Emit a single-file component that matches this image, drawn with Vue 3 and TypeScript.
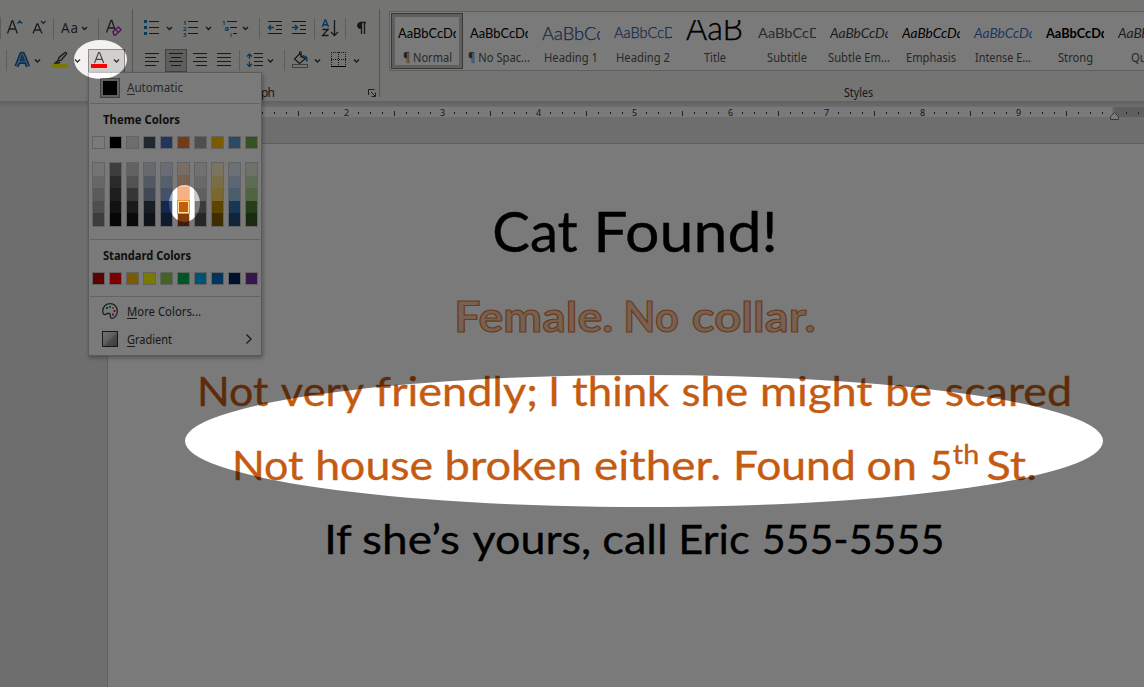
<script setup lang="ts">
import { h } from 'vue'

interface FitProps { t: string; w: number; hgt: number; b: number; u?: number }

// A single line of text set to an exact advance width.
const Fit = (p: FitProps) =>
  h('svg', { width: p.w, height: p.hgt, class: 'fit' }, [
    h('text', { x: 0, y: p.b, textLength: p.w, lengthAdjust: 'spacingAndGlyphs', fill: 'currentColor' }, p.t),
    p.u ? h('rect', { x: 0, y: p.b + 2, width: p.u, height: 1, fill: 'currentColor' }) : null,
  ])
Fit.props = ['t', 'w', 'hgt', 'b', 'u']

const Chevron = (p: { x: number; y: number }) =>
  h('path', { d: `M${p.x} ${p.y}l2.5 2.5 2.5-2.5`, fill: 'none', stroke: '#333', 'stroke-width': 1.4 })
Chevron.props = ['x', 'y']

// Side bearings of the document face, in ems.
const left: Record<string, number> = { C: .05, F: .09, N: .09, c: .04, v: .005, f: .015, I: .1, t: .015, s: .03, m: .08, b: .075, h: .075, e: .04, o: .04, y: .005, E: .09, '5': .04, S: .035 }
const right: Record<string, number> = { t: .02, '!': .1, '.': .07, y: .005, ';': .07, I: .1, k: 0, e: .035, d: .075, h: .07, f: 0, s: .03, ',': .07, l: .08, c: .02, '5': .04, r: 0, n: .07 }

interface Word { t: string; x: number; w: number; b: number; size: number }
const PAGE = 108
const line = (cls: string, size: number, hgt: number, b: number, words: [string, number, number, number?, number?][]) => ({
  cls,
  size,
  hgt,
  words: words.map(([t, from, to, s, base]): Word => {
    const em = s ?? size
    const lb = left[t[0]] * em
    return { t, x: from - lb - PAGE, w: to - from + lb + right[t[t.length - 1]] * em, b: base ?? b, size: em }
  }),
})

const lines = [
  line('dark', 56, 80, 58, [['Cat', 495, 576.7], ['Found!', 598.3, 772.3]]),
  line('outlined', 41.5, 74, 58.2, [['Female.', 458, 610.4], ['No', 627.3, 679.3], ['collar.', 693.5, 812.8]]),
  line('orange', 41.5, 74, 58, [
    ['Not', 200.7, 267.7], ['very', 281, 363.7], ['friendly;', 376, 535], ['I', 552.3, 555.7], ['think', 572.7, 669.3],
    ['she', 682.7, 746.7], ['might', 763.3, 871.7], ['be', 888.3, 930.7], ['scared', 946, 1069],
  ]),
  line('orange', 41.5, 74, 58, [
    ['Not', 235.7, 302.7], ['house', 318.3, 431.7], ['broken', 447.7, 579], ['either.', 595.7, 718.3], ['Found', 736.7, 852.7],
    ['on', 868.3, 914], ['5', 931.7, 950.7], ['th', 953.3, 977.3, 27.5, 42], ['St.', 987.7, 1034],
  ]),
  line('dark', 41.5, 74, 58, [['If', 328.3, 351.7], ['she’s', 363.3, 458.7], ['yours,', 472.7, 588.3], ['call', 604, 664.3], ['Eric', 682, 749], ['555-5555', 763.3, 942.7]]),
]

const styles = [
  { n: '¶ Normal', nw: 49, s: 'AaBbCcDd', sw: 62, b: 18, k: 'normal' },
  { n: '¶ No Spac...', nw: 62, s: 'AaBbCcDd', sw: 62, b: 18, k: 'normal' },
  { n: 'Heading 1', nw: 54, s: 'AaBbCc', sw: 63, b: 20, k: 'h1' },
  { n: 'Heading 2', nw: 54, s: 'AaBbCcD', sw: 61, b: 18, k: 'h2' },
  { n: 'Title', nw: 22, s: 'AaB', sw: 57, b: 20, k: 'title' },
  { n: 'Subtitle', nw: 40, s: 'AaBbCcD', sw: 62, b: 18, k: 'subtitle' },
  { n: 'Subtle Em...', nw: 62, s: 'AaBbCcDd', sw: 62, b: 18, k: 'subtle' },
  { n: 'Emphasis', nw: 50, s: 'AaBbCcDd', sw: 62, b: 18, k: 'emph' },
  { n: 'Intense E...', nw: 56, s: 'AaBbCcDd', sw: 62, b: 18, k: 'intense' },
  { n: 'Strong', nw: 35, s: 'AaBbCcDd', sw: 62, b: 18, k: 'strong' },
  { n: 'Quote', nw: 33, s: 'AaBbCcDd', sw: 62, b: 18, k: 'quote' },
]

const theme = ['#ffffff', '#000000', '#e7e6e6', '#44546a', '#4472c4', '#ed7d31', '#a5a5a5', '#ffc000', '#5b9bd5', '#70ad47']
const shades = [
  ['#f2f2f2', '#d8d8d8', '#bfbfbf', '#a5a5a5', '#7f7f7f'],
  ['#7f7f7f', '#595959', '#3f3f3f', '#262626', '#0c0c0c'],
  ['#d0cece', '#aeabab', '#757070', '#3a3838', '#171616'],
  ['#d6dce4', '#adb9ca', '#8496b0', '#323f4f', '#222a35'],
  ['#d9e2f3', '#b4c6e7', '#8eaadb', '#2f5496', '#1f3864'],
  ['#fbe5d5', '#f7cbac', '#f4b183', '#c55a11', '#833c0b'],
  ['#ededed', '#dbdbdb', '#c9c9c9', '#7b7b7b', '#525252'],
  ['#fff2cc', '#fee599', '#ffd965', '#bf9000', '#7f6000'],
  ['#deebf6', '#bdd7ee', '#9cc3e5', '#2e75b5', '#1e4e79'],
  ['#e2efd9', '#c5e0b3', '#a8d08d', '#538135', '#375623'],
]
const standard = ['#c00000', '#ff0000', '#ffc000', '#ffff00', '#92d050', '#00b050', '#00b0f0', '#0070c0', '#002060', '#7030a0']

const ticks: { x: number; tall: boolean }[] = []
for (let i = 0; i < 90; i++) {
  const x = 154 + i * 12
  if (x > 1144) break
  if (i % 8 !== 0 && x !== 1114) ticks.push({ x, tall: i % 8 === 4 })
}
const inches = [1, 2, 3, 4, 5, 6, 7, 8, 9].map((n) => ({ n, x: 154.5 + n * 96 }))
</script>

<template>
  <div class="window">
    <header class="ribbon">
      <svg class="group-font" width="133" height="101" viewBox="0 0 133 101">
        <g stroke="#c4c2c0"><path d="M.5 17v22M53.5 18v21M98.5 18v21M6.5 50v21" /></g>
        <path d="M132.5 9v88" stroke="#b3b0ad" />
        <g fill="none" stroke="#3b3a39" stroke-width="1.3">
          <path d="M7.5 33.5L12 21h.8L17.3 33.5M9 29h7" />
          <path d="M33 33.5L37 24h.8L42 33.5M34.6 30h6" />
          <path d="M106.5 32.5L111 20.5h.8L115.5 31M108 28h6.5" />
        </g>
        <g fill="none" stroke="#1e6fb0" stroke-width="1.4"><path d="M17.5 23.5l2.3-2.5 2.3 2.5M41 21l2.3 2.5 2.3-2.5" /></g>
        <text x="61" y="33" textLength="17" class="glyph aa">Aa</text>
        <Chevron :x="82" :y="27" />
        <path d="M113 31.5l5.5-4.5 2.5 3-5.5 5h-1.5z" fill="#f3f2f1" stroke="#a033a8" stroke-width="1.4" /><path d="M115.5 29.5l3 3" stroke="#a033a8" stroke-width="1.3" />
        <g fill="none" stroke-linejoin="round">
          <path d="M16.5 66.5L21.5 54h1.5L28 66.5M18.7 61.7h7" stroke="#1563a5" stroke-width="4.4" />
          <path d="M16.5 66.5L21.5 54h1.5L28 66.5M18.7 61.7h7" stroke="#9cc7e8" stroke-width="1.1" />
        </g>
        <Chevron :x="35" :y="59.500" />
        <path d="M58 60.5l1-3 6-5c1-.6 2 .4 1.5 1.500l-5 6-2.5.8zM58 60.5l-3 2.5h4l1-1" fill="#d8d6d3" stroke="#3b3a39" stroke-width="1.3" />
        <rect x="52" y="64" width="16" height="4" fill="#ffff00" />
        <Chevron :x="75" :y="59.500" />
        <rect x="88.5" y="49.5" width="36" height="23" fill="#d2d0ce" stroke="#8f8d8b" />
        <path d="M94.5 63L98.6 52.5h1L103.7 63M96 59.3h6.5" fill="none" stroke="#4a4948" stroke-width="1.2" />
        <rect x="91" y="64" width="16" height="4" fill="#ff0000" />
        <Chevron :x="114" :y="59.500" />
      </svg>
      <svg class="group-par" width="247" height="101" viewBox="133 0 247 101">
        <g stroke="#c4c2c0"><path d="M259.5 18v21M314.5 18v21M345.5 18v21M239.5 50v21M284.5 50v21" /></g>
        <path d="M379.5 9v88" stroke="#b3b0ad" />
        <rect x="165.5" y="49.5" width="21" height="22" fill="#c8c6c4" stroke="#8f8d8b" />
        <g stroke="#333" fill="none">
          <path d="M149 21.5h10M149 27.5h10M149 33.5h10M188 21.5h10M188 27.5h10M188 33.5h10M227 21.5h10M230 27.5h7M233 33.5h4" />
          <path d="M268 21.5h14M276 25.5h6M276 29.5h6M268 33.5h14M292 21.5h14M300 25.5h6M300 29.5h6M292 33.5h14" />
          <path d="M145 53.5h14M145 57.5h11M145 61.5h14M145 65.5h11M169 53.5h14M171 57.5h10M169 61.5h14M171 65.5h10M193 53.5h14M196 57.5h11M193 61.5h14M196 65.5h11M217 53.5h14M217 57.5h14M217 61.5h14M217 65.5h14" />
          <path d="M254 53.5h9M254 57.5h9M254 61.5h9M254 65.5h9" />
          <path d="M334.5 20v15.5M331 32l3.5 3.5 3.5-3.5" stroke-width="1.3" />
        </g>
        <g fill="#1878bd"><rect x="144" y="20" width="3" height="3" /><rect x="144" y="26" width="3" height="3" /><rect x="144" y="32" width="3" height="3" /></g>
        <g class="glyph tiny" fill="#1878bd">
          <text x="183" y="24.5">1</text><text x="183" y="30.5">2</text><text x="183" y="36.5">3</text>
          <text x="222" y="24.5">1</text><text x="224.5" y="30.5" class="a">a</text><text x="230" y="36.5">i</text>
        </g>
        <g fill="none" stroke="#1878bd" stroke-width="1.4">
          <path d="M274 27.5h-5.5M271 25l-2.5 2.5 2.5 2.5M292 27.5h5.5M295 25l2.5 2.5-2.5 2.5" />
          <path d="M249.5 54v5M247 56.5l2.5-2.5 2.5 2.5M249.5 61.5v5M247 64l2.5 2.5 2.5-2.5" />
          <path d="M322.3 27l2.8-7h.6l2.8 7M323.3 24.7h4.2" />
        </g>
        <path d="M322.500 29.5h5.5l-5.5 6h6" fill="none" stroke="#333" stroke-width="1.3" />
        <path d="M360 22.5h6M361.500 22.5v11.5M364.500 22.5v11.5" stroke="#333" stroke-width="1.3" /><path d="M360.500 22.500a3 3 0 0 0 0 6z" fill="#333" stroke="#333" />
        <Chevron :x="167" :y="27" /><Chevron :x="206" :y="27" /><Chevron :x="243" :y="27" />
        <Chevron :x="268" :y="59.500" /><Chevron :x="315" :y="59.500" /><Chevron :x="354" :y="59.500" />
        <path d="M299.5 54l5.5 5-5.5 4.5-5-4.5 5-5v-1.5c0-.8 1.6-.8 1.6 0V58" fill="none" stroke="#333" stroke-width="1.2" />
        <path d="M303 55.5l4 1.5v4.5l-1.5-3z" fill="#1878bd" stroke="#1878bd" />
        <rect x="292.5" y="64.5" width="15" height="3" fill="#f3f2f1" stroke="#8a8886" />
        <path d="M331 52.5h15M331 59.5h15M331.5 52v13M338.5 52v13M345.5 52v13" stroke="#333" stroke-dasharray="1 1" fill="none" />
        <path d="M331 66.5h15" stroke="#000" />
        <text x="222" y="97" textLength="53" class="glyph cap">Paragraph</text>
        <path d="M368.5 95v-5.5h6M371 92l4.5 4.5M375.5 92.5v4h-4" fill="none" stroke="#444" />
      </svg>
      <section class="styles">
        <div class="gallery">
          <div v-for="(s, i) in styles" :key="s.n" class="card" :class="{ on: i === 0 }">
            <div class="sample" :class="s.k"><Fit :t="s.s" :w="s.sw" :hgt="26" :b="s.b" /></div>
            <Fit class="name" :t="s.n" :w="s.nw" :hgt="16" :b="12" />
          </div>
        </div>
        <div class="caption"><Fit t="Styles" :w="29" :hgt="16" :b="12" /></div>
      </section>
    </header>

    <svg class="ruler" width="1144" height="42" viewBox="0 101 1144 42">
      <defs><linearGradient id="drop" x1="0" y1="0" x2="0" y2="1"><stop offset="0" stop-color="#cbcac9" /><stop offset="1" stop-color="#e6e6e6" /></linearGradient></defs>
      <rect x="0" y="101" width="1144" height="6" fill="url(#drop)" />
      <rect x="108" y="107" width="1004" height="10" fill="#fff" />
      <rect x="1114" y="107" width="30" height="10" fill="#c6c6c6" />
      <rect v-for="t in ticks" :key="t.x" :x="t.x" :y="t.tall ? 111 : 112" width="1" :height="t.tall ? 5 : 2" fill="#444" />
      <text v-for="m in inches" :key="m.n" :x="m.x - 2.5" y="116" class="glyph num">{{ m.n }}</text>
      <path d="M1110.5 119.5v-3l4-4 4 4v3z" fill="#fff" stroke="#777" />
    </svg>

    <main class="page">
      <svg v-for="(l, i) in lines" :key="i" class="line" :class="l.cls" width="1036" :height="l.hgt">
        <text
          v-for="(w, j) in l.words" :key="j" :x="w.x" :y="w.b" :font-size="w.size"
          :textLength="w.w" lengthAdjust="spacingAndGlyphs"
        >{{ w.t }}</text>
      </svg>
    </main>

    <aside class="menu">
      <div class="row auto"><i class="auto-box"></i><Fit t="Automatic" :w="56" :hgt="16" :b="12" :u="8" /></div>
      <hr />
      <div class="head"><Fit t="Theme Colors" :w="77" :hgt="16" :b="12" /></div>
      <div class="swatches"><i v-for="c in theme" :key="c" class="sw" :style="{ background: c }"></i></div>
      <div class="swatches shades">
        <div v-for="(col, ci) in shades" :key="ci" class="col">
          <i v-for="(c, ri) in col" :key="ri" :class="{ picked: ci === 5 && ri === 3 }" :style="{ background: c }"></i>
        </div>
      </div>
      <hr />
      <div class="head"><Fit t="Standard Colors" :w="88" :hgt="16" :b="12" /></div>
      <div class="swatches"><i v-for="c in standard" :key="c" class="sw" :style="{ background: c }"></i></div>
      <hr class="last" />
      <div class="row">
        <svg width="16" height="16" viewBox="0 0 16 16">
          <path d="M8 .7c4.5 0 7.3 3 7.3 7.3 0 4-2.5 7.3-5.5 7.3-2.500 0-.8-3-1.8-4.3S5 10.5 3.5 11.5C1.5 12 .7 10 .7 8 .7 3.5 4 .7 8 .7z" fill="#fff" stroke="#444" stroke-width="1.3" />
          <rect x="4" y="4" width="2" height="2" fill="#1878bd" /><rect x="7" y="3" width="2" height="2" fill="#2ca05a" /><rect x="10" y="4" width="2" height="2" fill="#e8912d" /><rect x="11.5" y="7" width="2" height="2" fill="#d13438" /><rect x="10" y="10.5" width="2" height="2" fill="#a033a8" />
        </svg>
        <Fit t="More Colors..." :w="74" :hgt="16" :b="13" :u="10" />
      </div>
      <div class="row">
        <svg width="16" height="16" viewBox="0 0 16 16">
          <defs><linearGradient id="gg" x1="0" y1="0" x2="1" y2="1"><stop offset="0" stop-color="#f4f4f4" /><stop offset=".5" stop-color="#c4c4c4" /><stop offset=".55" stop-color="#a0a0a0" /><stop offset="1" stop-color="#7c7c7c" /></linearGradient></defs>
          <rect x=".5" y=".5" width="15" height="15" fill="url(#gg)" stroke="#333" />
        </svg>
        <Fit t="Gradient" :w="45" :hgt="16" :b="13" :u="8" />
        <svg class="arrow" width="8" height="12" viewBox="0 0 8 12"><path d="M1.500 1.500L6 6l-4.500 4.500" fill="none" stroke="#333" stroke-width="1.3" /></svg>
      </div>
    </aside>

    <svg class="dim" width="1144" height="687" viewBox="0 0 1144 687">
      <path
        fill-rule="evenodd" fill="#000" fill-opacity=".522"
        d="M0 0H1144V687H0ZM74 59.5a26.5 19.5 0 1 0 53 0a26.5 19.5 0 1 0-53 0ZM169 203.5a15.5 18.5 0 1 0 31 0a15.5 18.5 0 1 0-31 0ZM185 441a459 66 0 1 0 918 0a459 66 0 1 0-918 0Z"
      />
    </svg>
  </div>
</template>

<style>
html, body { margin: 0; overflow: hidden; }
.fit { display: block; overflow: visible; flex: none; }
</style>

<style scoped>
.window { position: relative; width: 1144px; height: 687px; overflow: hidden; background: #e6e6e6; font-family: "Noto Sans", sans-serif; font-size: 12px; color: #444; display: flex; flex-direction: column; }
.ribbon { display: flex; height: 101px; flex: none; background: #f3f2f1; }
.group-font, .group-par { flex: none; display: block; }
.glyph { font-family: "Noto Sans", sans-serif; }
.aa { font-size: 13.5px; fill: #3b3a39; }
.tiny { font-size: 6px; font-weight: 700; }
.tiny .a { font-size: 7.5px; }
.cap { font-size: 12px; fill: #333; }
.num { font-size: 9px; fill: #333; }
.styles { flex: 1; min-width: 0; padding: 11px 0 0 9px; }
.gallery { display: flex; width: 800px; height: 58px; border: 1px solid #c6c4c2; background: #fff; padding-left: 1px; }
.card { box-sizing: border-box; width: 72px; height: 56px; flex: none; margin-top: 1px; padding: 7px 7px 0; display: flex; flex-direction: column; align-items: center; }
.card.on { border: 1px solid #777; box-shadow: inset 0 0 0 3px #c8c6c4; padding: 6px 6px 0; }
.sample { width: 58px; height: 26px; overflow: hidden; font: 12.8px Lato, sans-serif; color: #000; flex: none; margin-bottom: 4px; }
.sample .fit { margin-left: -.5px; }
.h1 { font-size: 17.5px; font-weight: 300; color: #2f5496; stroke: #2f5496; stroke-width: .25px; }
.h2 { font-size: 15.3px; font-weight: 300; color: #2f5496; stroke: #2f5496; stroke-width: .25px; }
.title { font-size: 33px; font-weight: 300; stroke: #000; stroke-width: .4px; }
.subtitle { color: #5a5a5a; }
.subtle { font-style: italic; color: #404040; }
.emph { font-style: italic; }
.intense { font-style: italic; color: #4472c4; }
.strong { font-weight: 700; }
.quote { font-style: italic; color: #404040; }
.name { color: #555; }
.caption { margin: 14px 0 0 455px; color: #333; }
.ruler { display: block; flex: none; }
.page { box-sizing: border-box; width: 1037px; margin-left: 107px; flex: 1; background: #fff; border: 1px solid #c6c6c6; border-width: 1px 0 0 1px; padding-top: 50px; font-family: Lato, sans-serif; }
.line { display: block; overflow: visible; }
.dark { fill: #000; stroke: #000; stroke-width: .35px; }
.orange { fill: #c55a11; stroke: #c55a11; stroke-width: .35px; }
.outlined { font-weight: 700; fill: #f7cbac; stroke: #e07b35; stroke-width: 1.1px; }
.menu { position: absolute; left: 88px; top: 72px; box-sizing: border-box; width: 174px; height: 284px; background: #fff; border: 1px solid #c0bebc; box-shadow: 1px 2px 4px rgba(0, 0, 0, .3); color: #333; padding: 5px 1px 0; }
.menu hr { height: 1px; border: 0; margin: 0; background: #d2d0ce; }
.row { display: flex; align-items: center; gap: 9px; height: 28px; padding-left: 12px; }
.row.auto { height: 25px; gap: 7px; padding-left: 10px; align-items: flex-start; color: #555; }
.row.auto .fit { margin-top: 2px; }
.auto-box { box-sizing: border-box; width: 20px; height: 20px; border: 1px solid #8a8886; background: #000; box-shadow: inset 0 0 0 2px #c8c6c4; }
.head { padding: 8px 0 0 13px; height: 24px; font-weight: 700; color: #222; }
.swatches { display: flex; gap: 4px; padding-left: 2px; }
.sw { box-sizing: border-box; width: 13px; height: 13px; border: 1px solid #d0d0d0; }
.shades { margin: 13px 0 12px; }
.col { box-sizing: border-box; width: 13px; height: 65px; border: 1px solid #d0d0d0; display: flex; flex-direction: column; }
.col i { flex: 1; }
.col .picked { margin: 0 -1px; border: 1px solid #ee9336; box-shadow: inset 0 0 0 1px #ffe294; }
.last.last { margin-top: 11px; }
.arrow { margin-left: 64px; }
.dim { position: absolute; left: 0; top: 0; }
</style>
